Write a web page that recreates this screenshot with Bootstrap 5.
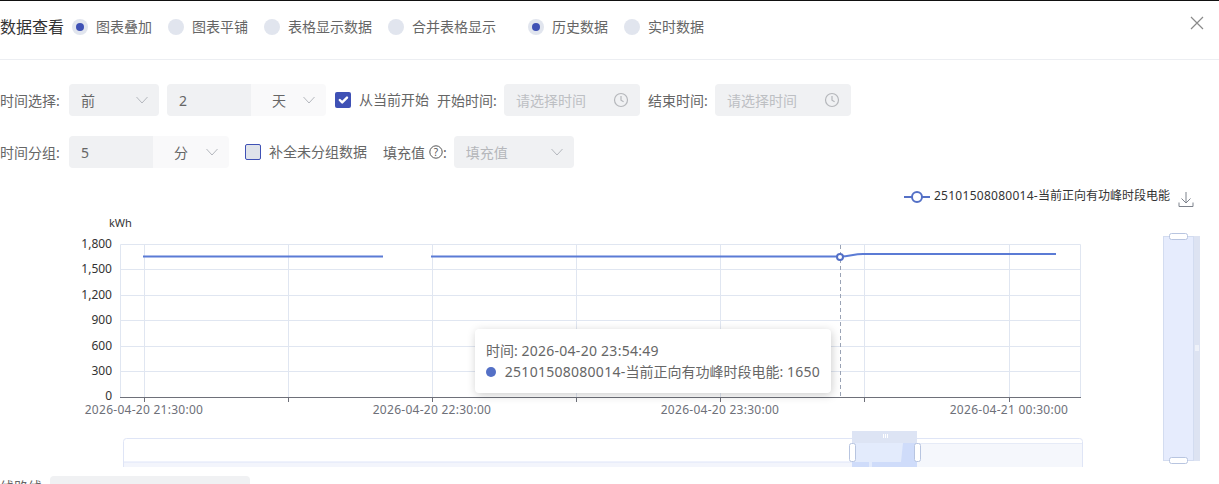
<!DOCTYPE html>
<html lang="zh-CN">
<head>
  <meta charset="UTF-8">
  <meta name="viewport" content="width=device-width, initial-scale=1.0">
  <title>数据查看</title>
  <link href="https://cdn.jsdelivr.net/npm/bootstrap@5.3.3/dist/css/bootstrap.min.css" rel="stylesheet">
  <style>
    body {
      font-family: "Noto Sans", "Noto Sans CJK SC", sans-serif;
      font-size: 14px;
      color: #666;
      height: 484px;
      overflow: hidden;
      border-top: 1px solid #111;
    }
    .num { letter-spacing: .27px; }
    .top-bar { height: 59px; border-bottom: 1px solid #eceef2; padding-bottom: 6px; }
    .top-title { font-size: 16px; color: #333; margin-right: 8px; white-space: nowrap; }
    .pick { display: flex; align-items: center; gap: 0; margin: 0; min-height: 0; padding: 0; white-space: nowrap; }
    .pick .form-check-input {
      width: 16px; height: 16px; margin: 0 8px 0 0; float: none; flex: none;
      background-color: #e1e5ee; border: 0;
    }
    .pick .form-check-input:checked[type=radio] {
      background-color: #e1e5ee;
      background-size: 16px 16px;
      background-image: url("data:image/svg+xml,%3csvg xmlns='http://www.w3.org/2000/svg' viewBox='0 0 16 16'%3e%3ccircle cx='8' cy='8' r='4' fill='%233f51b5'/%3e%3c/svg%3e");
    }
    .pick .form-check-label { color: #666; line-height: 20px; }
    .pick-box .form-check-input { border-radius: 2px; }
    .pick-box .form-check-input:checked[type=checkbox] { background-color: #3f51b5; }
    .pick-box .form-check-input:not(:checked) { background-color: #dfe3ea; border: 1px solid #3f51b5; }
    .group-gap { margin-left: 16px; }
    .check-now { margin-left: 9px; }
    .row-filter { height: 32px; }
    .row-filter + .row-filter { margin-top: 20px; }
    .field-label { color: #666; white-space: nowrap; }
    .label-fixed { width: 61px; }
    .label-time { width: 60px; margin-left: 8px; }
    .soft-select {
      height: 32px; border: 0; border-radius: 4px; font-size: 14px; color: #666;
      background-color: #f0f1f3; padding: 0 12px;
      background-position: right 11px center; background-size: 12px 12px;
      background-image: url("data:image/svg+xml,%3csvg xmlns='http://www.w3.org/2000/svg' viewBox='0 0 12 12'%3e%3cpath fill='none' stroke='%23b4b7bd' d='M.5 3 6 9l5.500-6'/%3e%3c/svg%3e");
    }
    .filter-when { width: 90px; flex: none; }
    .filter-fill { width: 120px; flex: none; margin-left: 7px; }
    .soft-select:disabled { background-color: #f0f1f3; color: #b5b7bb; opacity: 1; }
    .input-group > .soft-input {
      position: relative; z-index: 1;
      height: 32px; border: 0; border-radius: 4px 0 0 4px; background: #f0f1f3; width: 84px; flex: none;
      font-size: 14px; color: #666; padding: 0 12px;
    }
    .input-group > .soft-unit {
      height: 32px; border: 0; border-radius: 0 4px 4px 0; background-color: #f9f9fa; width: 76px; flex: none;
      padding: 0 12px 0 22px;
    }
    .input-group > .unit-short { width: 77px; }
    .time-field {
      height: 32px; width: 136px; flex: none; background: #f0f1f3; border-radius: 4px; padding: 0 11px 0 12px;
      margin-left: 7px; color: #bdbfc3; white-space: nowrap;
    }
    .chart-legend { height: 27px; margin-top: 15px; font-size: 12px; color: #333; padding-right: 25px; }
    .legend-text { margin-bottom: 2px; }
    .legend-save { margin-top: 4px; }
    .chart-wrap { height: 257px; }
    .chart-wrap svg { display: block; }
    .axis-y { font-size: 12px; fill: #333; text-anchor: end; }
    .axis-x { font-size: 12px; fill: #6e7079; text-anchor: middle; letter-spacing: .27px; }
    .chart-tip {
      left: 475px; top: 119px; width: 356px; height: 64px; padding: 11px;
      background: #fff; border-radius: 4px; box-shadow: 1px 2px 10px rgba(0,0,0,.2);
      color: #666; line-height: 21px; white-space: nowrap;
    }
    .tip-dot { width: 10px; height: 10px; border-radius: 50%; background: #5470c6; margin-right: 9px; }
    .bottom-field { margin-top: 9px; height: 32px; }
    .bottom-label { width: 42px; }
    .bottom-box { width: 200px; height: 32px; background: #f0f1f3; border-radius: 4px; margin-left: 8px; }
    .close-x { top: 14px; right: 14px; width: 16px; height: 16px; }
  </style>
</head>
<body class="position-relative">

  <div class="top-bar d-flex align-items-center">
    <span class="top-title">数据查看</span>
    <div class="d-flex align-items-center gap-3">
      <div class="form-check pick"><input class="form-check-input" type="radio" name="mode" id="m1" checked><label class="form-check-label" for="m1">图表叠加</label></div>
      <div class="form-check pick"><input class="form-check-input" type="radio" name="mode" id="m2"><label class="form-check-label" for="m2">图表平铺</label></div>
      <div class="form-check pick"><input class="form-check-input" type="radio" name="mode" id="m3"><label class="form-check-label" for="m3">表格显示数据</label></div>
      <div class="form-check pick"><input class="form-check-input" type="radio" name="mode" id="m4"><label class="form-check-label" for="m4">合并表格显示</label></div>
      <div class="form-check pick group-gap"><input class="form-check-input" type="radio" name="src" id="s1" checked><label class="form-check-label" for="s1">历史数据</label></div>
      <div class="form-check pick"><input class="form-check-input" type="radio" name="src" id="s2"><label class="form-check-label" for="s2">实时数据</label></div>
    </div>
  </div>
  <svg class="close-x position-absolute" viewBox="0 0 16 16"><path d="M2 2l12 12M14 2 2 14" stroke="#8a8a8a" stroke-width="1.2" fill="none"/></svg>

  <div class="pt-4">
    <div class="row-filter d-flex align-items-center">
      <span class="field-label label-fixed">时间选择:</span>
      <select class="form-select soft-select ms-2 filter-when"><option>前</option></select>
      <div class="input-group w-auto flex-nowrap ms-2">
        <input class="form-control soft-input" value="2">
        <select class="form-select soft-select soft-unit"><option>天</option></select>
      </div>
      <div class="form-check pick pick-box check-now"><input class="form-check-input" type="checkbox" id="c1" checked><label class="form-check-label" for="c1">从当前开始</label></div>
      <span class="field-label label-time">开始时间:</span>
      <div class="time-field d-flex align-items-center justify-content-between">请选择时间
        <svg width="16" height="16" viewBox="0 0 16 16"><circle cx="8" cy="8" r="6.500" fill="none" stroke="#b5b7bb" stroke-width="1.200"/><path d="M8 4v4.200l2.600 1.600" fill="none" stroke="#b5b7bb" stroke-width="1.200"/></svg>
      </div>
      <span class="field-label label-time">结束时间:</span>
      <div class="time-field d-flex align-items-center justify-content-between">请选择时间
        <svg width="16" height="16" viewBox="0 0 16 16"><circle cx="8" cy="8" r="6.500" fill="none" stroke="#b5b7bb" stroke-width="1.200"/><path d="M8 4v4.200l2.600 1.600" fill="none" stroke="#b5b7bb" stroke-width="1.200"/></svg>
      </div>
    </div>

    <div class="row-filter d-flex align-items-center">
      <span class="field-label label-fixed">时间分组:</span>
      <div class="input-group w-auto flex-nowrap ms-2">
        <input class="form-control soft-input" value="5">
        <select class="form-select soft-select soft-unit unit-short"><option>分</option></select>
      </div>
      <div class="form-check pick pick-box ms-3"><input class="form-check-input" type="checkbox" id="c2"><label class="form-check-label" for="c2">补全未分组数据</label></div>
      <span class="field-label ms-3 d-flex align-items-center">填充值<svg class="ms-1" width="14" height="14" viewBox="0 0 14 14"><circle cx="7" cy="7" r="6.200" fill="none" stroke="#555"/><text x="7" y="10.500" font-size="10" fill="#555" text-anchor="middle">?</text></svg>:</span>
      <select class="form-select soft-select filter-fill" disabled><option>填充值</option></select>
    </div>
  </div>

  <div class="chart-legend d-flex justify-content-end align-items-center">
    <svg class="me-1" width="26" height="14" viewBox="0 0 26 14"><path d="M0 7h26" stroke="#5470c6" stroke-width="2"/><circle cx="13" cy="7" r="5" fill="#fff" stroke="#5470c6" stroke-width="2"/></svg>
    <span class="legend-text"><span class="num">25101508080014-</span>当前正向有功峰时段电能</span>
    <svg class="legend-save ms-2" width="16" height="16" viewBox="0 0 16 16"><path d="M8 1v11M3.500 7.500 8 12l4.500-4.500M1 11.500v4h14v-4" fill="none" stroke="#7d828c"/></svg>
  </div>

  <div class="chart-wrap position-relative">
    <svg width="1219" height="257" viewBox="0 210 1219 257">
      <text x="109" y="227" font-size="11" fill="#333">kWh</text>
      <g stroke="#e0e6f1" fill="none">
        <path d="M120.500 244.500H1080.500V397M120.500 244.500V397"/>
        <path d="M120 269.500H1081M120 295.500H1081M120 320.500H1081M120 346.500H1081M120 371.500H1081"/>
        <path d="M144.500 245V397M288.500 245V397M432.500 245V397M576.500 245V397M720.500 245V397M864.500 245V397M1009.500 245V397"/>
      </g>
      <path d="M120 397.500H1081M144.500 397v5M288.500 397v5M432.500 397v5M576.500 397v5M720.500 397v5M864.500 397v5M1009.500 397v5" stroke="#6e7079" fill="none"/>
      <text class="axis-y" x="112" y="248">1,800</text>
      <text class="axis-y" x="112" y="273">1,500</text>
      <text class="axis-y" x="112" y="299">1,200</text>
      <text class="axis-y" x="112" y="324">900</text>
      <text class="axis-y" x="112" y="350">600</text>
      <text class="axis-y" x="112" y="375">300</text>
      <text class="axis-y" x="112" y="400">0</text>
      <text class="axis-x" x="144" y="414">2026-04-20 21:30:00</text>
      <text class="axis-x" x="432" y="414">2026-04-20 22:30:00</text>
      <text class="axis-x" x="720" y="414">2026-04-20 23:30:00</text>
      <text class="axis-x" x="1009" y="414">2026-04-21 00:30:00</text>
      <path d="M840.500 245V397" stroke="#9aa3b5" stroke-dasharray="4 3" fill="none"/>
      <path d="M143 256.500H383M431 256.500H840C850 256.500 853 254 863 254H1056" stroke="#5b7bd5" stroke-width="2" fill="none"/>
      <circle cx="840" cy="257" r="3" fill="#fff" stroke="#5470c6" stroke-width="2"/>

      <!-- bottom zoom slider -->
      <rect x="123.500" y="438.500" width="959" height="40" rx="3" fill="#fff" stroke="#dfe5f6"/>
      <rect x="124" y="462" width="728" height="6" fill="#f3f5fc"/>
      <path d="M124 462H852" stroke="#dfe5f8"/>
      <rect x="917" y="443" width="165" height="25" fill="#f5f7fc"/>
      <path d="M917 443.500H1082" stroke="#e6ebf7"/>
      <rect x="852" y="431" width="65" height="12" fill="#dde4f4"/>
      <rect x="852" y="443" width="65" height="25" fill="#e3ebfc"/>
      <path d="M852 468V462H869V468ZM872 468V462H901L903 443H917V468Z" fill="#cfdcfa"/>
      <path d="M883.500 434v4M885.500 434v4M887.500 434v4" stroke="#fff"/>
      <rect x="849.500" y="443.500" width="6" height="18" rx="2" fill="#fff" stroke="#b8c5e0"/>
      <rect x="914.500" y="443.500" width="6" height="18" rx="2" fill="#fff" stroke="#b8c5e0"/>

      <!-- right zoom slider -->
      <rect x="1193" y="236" width="7" height="225" fill="#dde3f2"/>
      <rect x="1163.500" y="236.500" width="30" height="224" fill="#e6ecfd" stroke="#d3dcf0"/>
      <path d="M1195 346h4M1195 348h4M1195 350h4" stroke="#fff"/>
      <rect x="1169.500" y="233.500" width="18" height="6" rx="2" fill="#fff" stroke="#b8c5e0"/>
      <rect x="1169.500" y="457.500" width="18" height="6" rx="2" fill="#fff" stroke="#b8c5e0"/>
    </svg>
    <div class="chart-tip position-absolute">
      <div>时间: <span class="num">2026-04-20 23:54:49</span></div>
      <div class="d-flex align-items-center"><span class="tip-dot"></span><span><span class="num">25101508080014-</span>当前正向有功峰时段电能: <span class="num">1650</span></span></div>
    </div>
  </div>

  <div class="bottom-field d-flex">
    <span class="field-label bottom-label">线路线:</span>
    <div class="bottom-box"></div>
  </div>

  <script src="https://cdn.jsdelivr.net/npm/bootstrap@5.3.3/dist/js/bootstrap.bundle.min.js"></script>
</body>
</html>
